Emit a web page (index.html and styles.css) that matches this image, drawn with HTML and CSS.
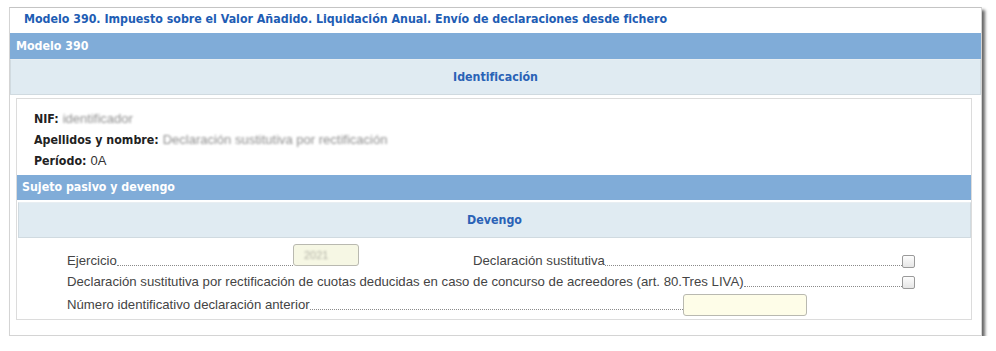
FILE: index.html
```html
<!DOCTYPE html>
<html lang="es">
<head>
<meta charset="utf-8">
<title>Modelo 390</title>
<link rel="stylesheet" href="styles.css">
</head>
<body>
<div class="frame">
  <div class="title">Modelo 390. Impuesto sobre el Valor Añadido. Liquidación Anual. Envío de declaraciones desde fichero</div>
  <div class="bar bar-main">Modelo 390</div>
  <div class="band band-id">Identificación</div>
  <div class="inner">
    <div class="info">
      <div class="info-row"><span class="info-label">NIF:</span><span class="blur">identificador</span></div>
      <div class="info-row"><span class="info-label">Apellidos y nombre:</span><span class="blur">Declaración sustitutiva por rectificación</span></div>
      <div class="info-row"><span class="info-label">Período:</span><span class="info-value">0A</span></div>
    </div>
    <div class="bar bar-sub">Sujeto pasivo y devengo</div>
    <div class="band band-dev">Devengo</div>
    <div class="form">
      <div class="form-row row-1">
        <div class="field field-ej">
          <span class="lbl">Ejercicio</span><span class="dots"></span>
          <span class="input input-ej"><span class="blur blur-in">2021</span></span>
        </div>
        <div class="field field-sust">
          <span class="lbl">Declaración sustitutiva</span><span class="dots"></span>
          <span class="check"></span>
        </div>
      </div>
      <div class="form-row row-2">
        <div class="field field-full">
          <span class="lbl">Declaración sustitutiva por rectificación de cuotas deducidas en caso de concurso de acreedores (art. 80.Tres LIVA)</span><span class="dots"></span>
          <span class="check"></span>
        </div>
      </div>
      <div class="form-row row-3">
        <div class="field field-num">
          <span class="lbl">Número identificativo declaración anterior</span><span class="dots"></span>
          <span class="input input-num"></span>
        </div>
      </div>
    </div>
  </div>
</div>
</body>
</html>
```

FILE: styles.css
```css
html, body {
  margin: 0;
  padding: 0;
  background: #ffffff;
}

body {
  font-family: "DejaVu Sans Condensed", "DejaVu Sans", sans-serif;
}

.frame {
  margin: 7px 0 0 9px;
  width: 973px;
  height: 329px;
  box-sizing: border-box;
  border: 1px solid #d4d4d4;
  border-top-color: #c4c4c4;
  background: #ffffff;
  box-shadow: 3px 3px 3px rgba(0, 0, 0, 0.6);
}

.title {
  height: 25px;
  line-height: 22px;
  padding-left: 14px;
  color: #1e5db4;
  font-weight: bold;
  font-size: 12.3px;
}

.bar {
  background: #80acd8;
  color: #ffffff;
  font-weight: bold;
  font-size: 12.3px;
}

.bar-main {
  height: 26px;
  line-height: 26px;
  padding-left: 6px;
}

.band {
  background: #e0ebf2;
  color: #2a62b6;
  font-weight: bold;
  font-size: 12.3px;
  text-align: center;
  box-sizing: border-box;
  border: 1px solid #d0dae0;
  border-top-color: #e8eef2;
}

.band-id {
  height: 36px;
  line-height: 34px;
}

.inner {
  margin: 3px 9px 0 6px;
  height: 222px;
  box-sizing: border-box;
  border: 1px solid #dcdcdc;
}

.info {
  padding: 9px 0 4px 17px;
}

.info-row {
  height: 21px;
  line-height: 21px;
  font-size: 12.3px;
  color: #222222;
}

.info-label {
  font-weight: bold;
  margin-right: 4px;
}

.info-value {
  font-family: "Liberation Sans", Arial, sans-serif;
  font-size: 13px;
  color: #333333;
}

.blur {
  font-family: "Liberation Sans", Arial, sans-serif;
  font-size: 13px;
  color: #8e8e8e;
  filter: blur(1.2px);
}

.bar-sub {
  height: 25px;
  line-height: 25px;
  padding-left: 5px;
}

.band-dev {
  margin: 2px 0 0 1px;
  height: 36px;
  line-height: 34px;
}

.form {
  padding: 9px 0 0 50px;
  font-family: "Liberation Sans", Arial, sans-serif;
  font-size: 13.2px;
  color: #444444;
}

.form-row {
  display: flex;
  align-items: flex-end;
  height: 21px;
}

.row-3 {
  margin-top: 2px;
}

.field {
  display: flex;
  align-items: flex-end;
}

.lbl {
  white-space: nowrap;
  line-height: 15px;
}

.dots {
  flex: 1;
  border-bottom: 1px dotted #8a8a8a;
  margin-bottom: 2px;
  height: 0;
}

.field-ej {
  width: 292px;
}

.field-sust {
  margin-left: 114px;
  width: 442px;
}

.field-full {
  width: 848px;
}

.field-num {
  width: 740px;
}

.input {
  box-sizing: border-box;
  border: 1px solid #b9b9b0;
  border-radius: 3px;
  background: #fbfbe8;
  display: flex;
  align-items: center;
  padding-left: 10px;
}

.input-ej {
  width: 66px;
  height: 22px;
  background: #f6f7e4;
  margin-bottom: 2px;
}

.blur-in {
  font-size: 11px;
  color: #b4b4a8;
}

.input-num {
  width: 124px;
  height: 22px;
  background: #fefde8;
  margin-bottom: -4px;
}

.check {
  width: 13px;
  height: 13px;
  box-sizing: border-box;
  border: 1px solid #9a9a9a;
  border-radius: 2px;
  background: linear-gradient(#fdfdfd, #e6e6e6);
}
```
